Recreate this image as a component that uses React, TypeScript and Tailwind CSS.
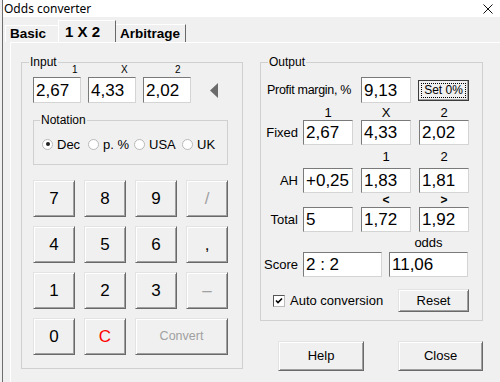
import React from "react";

const fieldCls =
  "flex items-center bg-white pl-[2px] text-[17px] leading-none text-black border border-t-[#7a7a7a] border-l-[#7a7a7a] border-b-[#d4d4d4] border-r-[#d4d4d4]";

const Box: React.FC<{ value: string; className?: string }> = ({ value, className = "" }) => (
  <div className={`${fieldCls} ${className}`}>{value}</div>
);

const Btn: React.FC<{ children: React.ReactNode; className?: string }> = ({ children, className = "" }) => (
  <div
    className={`flex items-center justify-center bg-[#f0f0f0] border border-t-[#e3e3e3] border-l-[#e3e3e3] border-r-[#696969] border-b-[#696969] shadow-[inset_1px_1px_0_#ffffff,inset_-1px_-1px_0_#a0a0a0] ${className}`}
  >
    {children}
  </div>
);

const Group: React.FC<{ label: string; labelLeft: string; className?: string; children: React.ReactNode }> = ({
  label,
  labelLeft,
  className = "",
  children,
}) => (
  <div className={`relative border border-[#d0d0d0] ${className}`}>
    <span className={`absolute -top-[8px] ${labelLeft} bg-[#f0f0f0] px-[1px] text-[12px] leading-[14px] text-black`}>
      {label}
    </span>
    {children}
  </div>
);

const Radio: React.FC<{ label: string; checked?: boolean; className?: string }> = ({ label, checked, className = "" }) => (
  <div className={`flex items-center ${className}`}>
    <span className="flex h-[11px] w-[11px] items-center justify-center rounded-full border border-[#b9b9b9] bg-white">
      {checked && <span className="h-[4px] w-[4px] rounded-full bg-[#222]" />}
    </span>
    <span className="ml-[4px] text-[13px] leading-none">{label}</span>
  </div>
);

const App: React.FC = () => {
  const keys = [
    { k: "7" },
    { k: "8" },
    { k: "9" },
    { k: "/", dim: true },
    { k: "4" },
    { k: "5" },
    { k: "6" },
    { k: "," },
    { k: "1" },
    { k: "2" },
    { k: "3" },
    { k: "–", dim: true },
    { k: "0" },
    { k: "C", red: true },
  ];

  return (
    <div className="h-[382px] w-[500px] overflow-hidden bg-[#f0f0f0] pl-[2px] font-['Liberation_Sans',Arial,sans-serif] text-black">
      <div className="flex h-full flex-col border-l border-[#6d6d6d]">
        {/* title bar */}
        <div className="flex h-[17px] shrink-0 items-center justify-between bg-white pl-[1px] pr-[7px]">
          <span className="font-['Noto_Sans',sans-serif] text-[12px] leading-none">Odds converter</span>
          <svg width="10" height="10" viewBox="0 0 10 10">
            <path d="M0.5 0.5 L9.5 9.5 M9.5 0.5 L0.5 9.5" stroke="#111" strokeWidth="1" />
          </svg>
        </div>

        {/* tabs */}
        <div className="flex h-[25px] shrink-0 items-end pl-[2px]">
          <div className="flex h-[17px] w-[53px] items-center border-l border-t border-white pl-[4px] text-[13.5px] font-bold leading-none">
            Basic
          </div>
          <div className="flex h-[22px] w-[58px] items-center border-l border-t border-r border-white border-r-[#696969] pl-[6px] text-[15px] font-bold leading-none">
            1 X 2
          </div>
          <div className="flex h-[18px] w-[70px] items-center border-t border-r border-white border-r-[#696969] pl-[4px] text-[13.5px] font-bold leading-none">
            Arbitrage
          </div>
        </div>

        {/* tab page */}
        <div className="ml-[7px] flex flex-1 border-l border-t border-white pl-[10px] pt-[19px]">
          {/* Input */}
          <Group label="Input" labelLeft="left-[7px]" className="h-[307px] w-[222px] shrink-0 pl-[11px]">
            <div className="mt-[2px] flex h-[10px] gap-[7px] text-[10px] leading-[10px]">
              <span className="w-[48px] pl-[39px]">1</span>
              <span className="w-[48px] pl-[33px]">X</span>
              <span className="w-[48px] pl-[32px]">2</span>
            </div>
            <div className="mt-[2px] flex h-[26px] items-center gap-[7px]">
              <Box value="2,67" className="h-[26px] w-[48px]" />
              <Box value="4,33" className="h-[26px] w-[48px]" />
              <Box value="2,02" className="h-[26px] w-[48px]" />
              <svg width="8" height="15" viewBox="0 0 8 15" className="ml-[12px]">
                <polygon points="8,0 8,15 0,7.5" fill="#6b6b6b" />
              </svg>
            </div>
            <Group label="Notation" labelLeft="left-[6px]" className="mt-[17px] h-[45px] w-[195px]">
              <div className="ml-[8px] mt-[17px] flex h-[12px] items-center">
                <Radio label="Dec" checked className="w-[46px]" />
                <Radio label="p. %" className="w-[46px]" />
                <Radio label="USA" className="w-[48px]" />
                <Radio label="UK" />
              </div>
            </Group>
            <div className="mt-[15px] grid grid-cols-[42px_42px_42px_42px] gap-x-[9px] gap-y-[9px]">
              {keys.map((b) => (
                <Btn
                  key={b.k}
                  className={`h-[37px] text-[17px] leading-none ${b.dim ? "text-[#a0a0a0]" : b.red ? "text-[#ff0000]" : "text-black"}`}
                >
                  {b.k}
                </Btn>
              ))}
              <Btn className="col-span-2 h-[37px] text-[12.5px] text-[#a0a0a0]">Convert</Btn>
            </div>
          </Group>

          {/* Output column */}
          <div className="ml-[17px] flex shrink-0 flex-col">
            <Group label="Output" labelLeft="left-[7px]" className="h-[259px] w-[223px]">
              <div className="mt-[14px] flex h-[26px] items-center">
                <span className="w-[100px] pl-[6px] text-[12.5px] leading-none tracking-[-0.3px]">Profit margin, %</span>
                <Box value="9,13" className="h-[26px] w-[50px]" />
                <div className="ml-[7px] flex h-[21px] w-[51px] items-center justify-center border border-[#3c3c3c] bg-[#f0f0f0] shadow-[inset_-1px_-1px_0_#a0a0a0]">
                  <span className="flex h-[15px] w-[45px] items-center justify-center border border-dotted border-black text-[12px] leading-none">
                    Set 0%
                  </span>
                </div>
              </div>

              <div className="mt-[4px] flex h-[12px] pl-[42px] text-[13px] leading-[12px]">
                <span className="w-[50px] text-center">1</span>
                <span className="ml-[8px] w-[50px] text-center">X</span>
                <span className="ml-[8px] w-[50px] text-center">2</span>
              </div>
              <div className="mt-[1px] flex h-[25px] items-center">
                <span className="w-[37px] text-right text-[13px] leading-none">Fixed</span>
                <div className="ml-[5px] flex gap-[8px]">
                  <Box value="2,67" className="h-[25px] w-[50px]" />
                  <Box value="4,33" className="h-[25px] w-[50px]" />
                  <Box value="2,02" className="h-[25px] w-[50px]" />
                </div>
              </div>

              <div className="mt-[6px] flex h-[12px] pl-[100px] text-[13px] leading-[12px]">
                <span className="w-[50px] text-center">1</span>
                <span className="ml-[8px] w-[50px] text-center">2</span>
              </div>
              <div className="mt-[5px] flex h-[25px] items-center">
                <span className="w-[37px] text-right text-[13px] leading-none">AH</span>
                <div className="ml-[5px] flex gap-[8px]">
                  <Box value="+0,25" className="h-[25px] w-[50px]" />
                  <Box value="1,83" className="h-[25px] w-[50px]" />
                  <Box value="1,81" className="h-[25px] w-[50px]" />
                </div>
              </div>

              <div className="mt-[1px] flex h-[12px] pl-[100px] text-[12px] font-bold leading-[12px]">
                <span className="w-[50px] text-center">&lt;</span>
                <span className="ml-[8px] w-[50px] text-center">&gt;</span>
              </div>
              <div className="mt-[1px] flex h-[25px] items-center">
                <span className="w-[37px] text-right text-[13px] leading-none">Total</span>
                <div className="ml-[5px] flex gap-[8px]">
                  <Box value="5" className="h-[25px] w-[50px]" />
                  <Box value="1,72" className="h-[25px] w-[50px]" />
                  <Box value="1,92" className="h-[25px] w-[50px]" />
                </div>
              </div>

              <div className="mt-[5px] flex h-[12px] pl-[128px] text-[13px] leading-[12px]">
                <span className="w-[79px] text-center">odds</span>
              </div>
              <div className="mt-[3px] flex h-[25px] items-center">
                <span className="w-[37px] text-right text-[13px] leading-none">Score</span>
                <div className="ml-[5px] flex gap-[7px]">
                  <Box value="2 : 2" className="h-[25px] w-[79px]" />
                  <Box value="11,06" className="h-[25px] w-[79px]" />
                </div>
              </div>

              <div className="mt-[12px] flex h-[23px] items-center">
                <span className="ml-[12px] flex h-[12px] w-[12px] items-center justify-center border border-t-[#555] border-l-[#555] border-b-[#bbb] border-r-[#bbb] bg-white">
                  <svg width="8" height="8" viewBox="0 0 8 8">
                    <path d="M1 3.5 L3 5.5 L7 1.5" stroke="#000" strokeWidth="1.6" fill="none" />
                  </svg>
                </span>
                <span className="ml-[5px] text-[13px] leading-none">Auto conversion</span>
                <Btn className="ml-auto mr-[13px] h-[23px] w-[71px] text-[13px]">Reset</Btn>
              </div>
            </Group>

            <div className="mt-[20px] flex">
              <Btn className="ml-[18px] h-[30px] w-[86px] text-[13px]">Help</Btn>
              <Btn className="ml-[34px] h-[30px] w-[85px] text-[13px]">Close</Btn>
            </div>
          </div>
        </div>
      </div>
    </div>
  );
};

export default App;
